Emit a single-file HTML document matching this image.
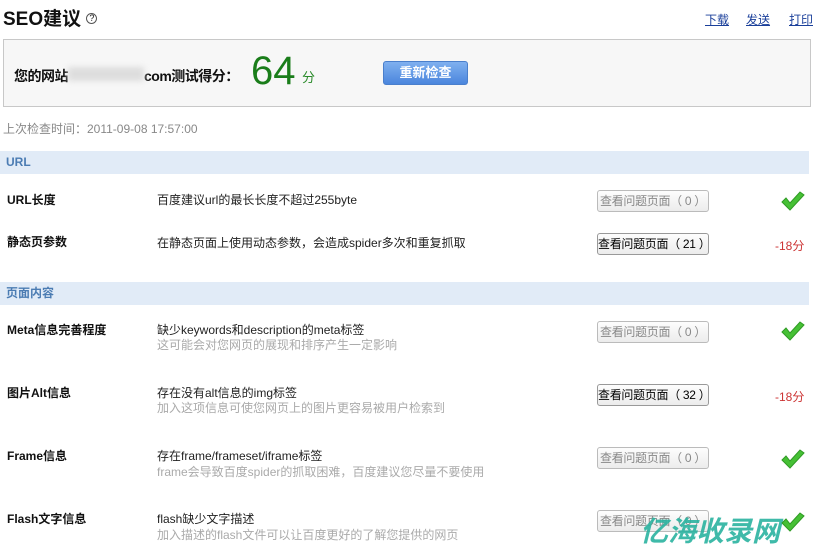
<!DOCTYPE html>
<html><head><meta charset="utf-8"><style>
body{margin:0;width:813px;height:551px;overflow:hidden;background:#fff;font-family:"Liberation Sans","Noto Sans CJK SC",sans-serif;position:relative}
.a{position:absolute;white-space:nowrap}
.sec{position:absolute;left:0;width:809px;height:23px;background:#e1ebf7;color:#4b7cb3;font-size:12px;font-weight:bold;line-height:23px;padding-left:6px;box-sizing:border-box}
.lbl{position:absolute;left:7px;font-size:12px;font-weight:bold;color:#111;white-space:nowrap}
.d{position:absolute;left:157px;font-size:12px;color:#222;white-space:nowrap}
.s{position:absolute;left:157px;font-size:12px;color:#aaa;white-space:nowrap}
.btn{position:absolute;left:597px;width:112px;height:22px;box-sizing:border-box;border:1px solid #bbb;border-radius:3px;background:linear-gradient(#fdfdfd,#ececec);font-size:12px;line-height:20px;text-align:center;color:#888;white-space:nowrap;letter-spacing:-0.3px}
.btn.on{color:#000;border-color:#999}
.pen{position:absolute;left:775px;font-size:12px;color:#c33}
.ck{position:absolute;left:780px}
</style></head><body>
<div class="a" style="left:3px;top:4px;font-size:19px;font-weight:bold;color:#111">SEO建议 <span style="font-size:9px;font-weight:normal;border:1px solid #555;border-radius:50%;display:inline-block;width:9px;height:9px;line-height:9px;text-align:center;vertical-align:4px">?</span></div>
<div class="a" style="left:705px;top:11px;font-size:12px;color:#1a3f9a;text-decoration:underline">下载</div>
<div class="a" style="left:746px;top:11px;font-size:12px;color:#1a3f9a;text-decoration:underline">发送</div>
<div class="a" style="left:789px;top:11px;font-size:12px;color:#1a3f9a;text-decoration:underline">打印</div>
<div style="position:absolute;left:3px;top:39px;width:808px;height:68px;box-sizing:border-box;border:1px solid #c8c8c8;background:#f7f7f7"></div>
<div class="a" style="left:14px;top:66px;font-size:14px;font-weight:bold;color:#111;letter-spacing:-0.5px">您的网站<span style="background:#ddd;display:inline-block;width:76px;height:14px;filter:blur(3px)"></span>com测试得分：</div>
<div class="a" style="left:251px;top:49px;font-size:40px;color:#1a7d1a">64</div>
<div class="a" style="left:302px;top:67px;font-size:13px;color:#2a8a2a">分</div>
<div style="position:absolute;left:383px;top:61px;width:85px;height:24px;border-radius:3px;background:linear-gradient(#7fb0ef,#4b86dd);border:1px solid #4a7fcc;box-sizing:border-box;color:#fff;font-size:13px;font-weight:bold;text-align:center;line-height:22px">重新检查</div>
<div class="a" style="left:3px;top:120px;font-size:12px;color:#888">上次检查时间：2011-09-08 17:57:00</div>
<div class="sec" style="top:151px">URL</div>
<div class="lbl" style="top:191px">URL长度</div><div class="d" style="top:191px">百度建议url的最长长度不超过255byte</div>
<div class="btn" style="top:190px">查看问题页面（ 0 ）</div>
<div class="lbl" style="top:233px">静态页参数</div><div class="d" style="top:234px">在静态页面上使用动态参数，会造成spider多次和重复抓取</div>
<div class="btn on" style="top:233px">查看问题页面（ 21 ）</div><div class="pen" style="top:237px">-18分</div>
<div class="sec" style="top:282px">页面内容</div>
<div class="lbl" style="top:321px">Meta信息完善程度</div><div class="d" style="top:321px">缺少keywords和description的meta标签</div><div class="s" style="top:336px">这可能会对您网页的展现和排序产生一定影响</div>
<div class="btn" style="top:321px">查看问题页面（ 0 ）</div>
<div class="lbl" style="top:384px">图片Alt信息</div><div class="d" style="top:384px">存在没有alt信息的img标签</div><div class="s" style="top:399px">加入这项信息可使您网页上的图片更容易被用户检索到</div>
<div class="btn on" style="top:384px">查看问题页面（ 32 ）</div><div class="pen" style="top:388px">-18分</div>
<div class="lbl" style="top:447px">Frame信息</div><div class="d" style="top:447px">存在frame/frameset/iframe标签</div><div class="s" style="top:463px">frame会导致百度spider的抓取困难，百度建议您尽量不要使用</div>
<div class="btn" style="top:447px">查看问题页面（ 0 ）</div>
<div class="lbl" style="top:510px">Flash文字信息</div><div class="d" style="top:510px">flash缺少文字描述</div><div class="s" style="top:526px">加入描述的flash文件可以让百度更好的了解您提供的网页</div>
<div class="btn" style="top:510px">查看问题页面（ 0 ）</div>
<div class="a" style="left:640px;top:510px;font-size:28px;font-weight:bold;font-style:italic;color:#2bb3a0;opacity:.9">亿海收录网</div>
<svg class="ck" style="top:191px" width="26" height="22"><path d="M2 11 L10 19 L24 4 L20 1 L10 12 L6 7 Z" fill="#46c035" stroke="#2f9a24"/></svg>
<svg class="ck" style="top:321px" width="26" height="22"><path d="M2 11 L10 19 L24 4 L20 1 L10 12 L6 7 Z" fill="#46c035" stroke="#2f9a24"/></svg>
<svg class="ck" style="top:449px" width="26" height="22"><path d="M2 11 L10 19 L24 4 L20 1 L10 12 L6 7 Z" fill="#46c035" stroke="#2f9a24"/></svg>
<svg class="ck" style="top:512px" width="26" height="22"><path d="M2 11 L10 19 L24 4 L20 1 L10 12 L6 7 Z" fill="#46c035" stroke="#2f9a24"/></svg>
</body></html>
